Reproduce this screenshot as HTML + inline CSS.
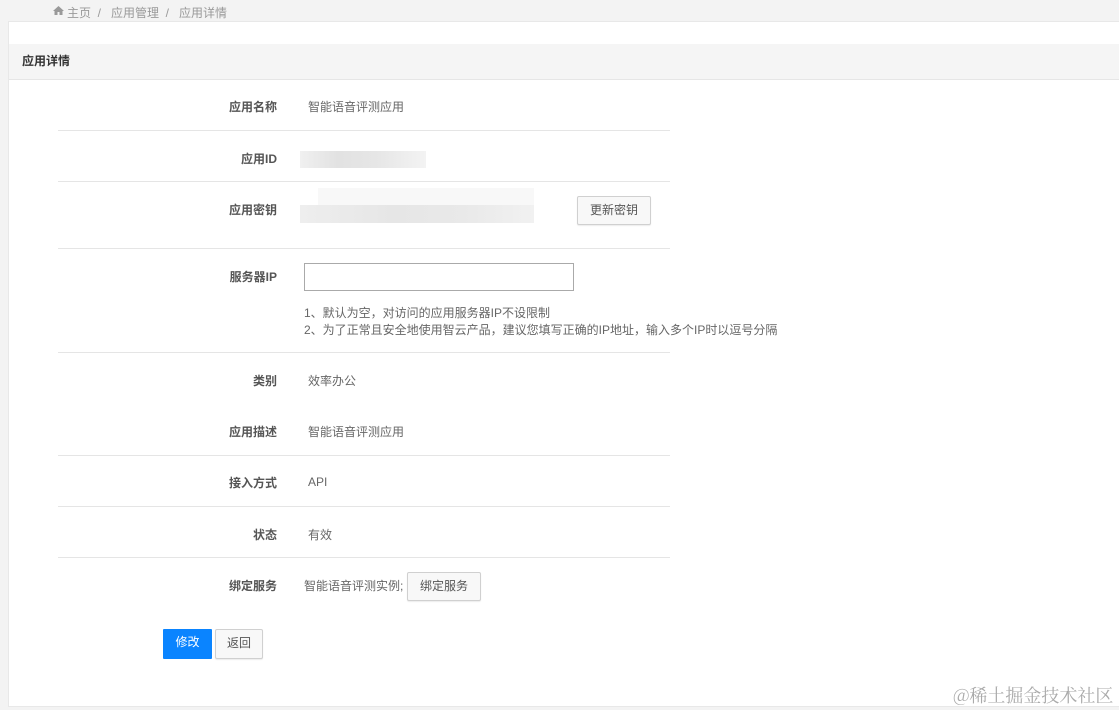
<!DOCTYPE html>
<html><head><meta charset="utf-8"><style>
*{margin:0;padding:0;box-sizing:border-box}
body{width:1119px;height:710px;background:#f3f3f3;font-family:"Liberation Sans","Noto Sans CJK SC",sans-serif;font-size:12px;color:#666;position:relative;overflow:hidden}
.a{position:absolute;white-space:nowrap}
.panel{position:absolute;left:8px;top:21px;width:1111px;height:686px;background:#fff;border:1px solid #e8e8e8;border-right:none}
.hdr{position:absolute;left:9px;top:44px;width:1110px;height:36px;background:#f5f5f5;border-bottom:1px solid #e6e6e6}
.line{position:absolute;left:58px;width:612px;height:1px;background:#e5e5e5}
.lbl{position:absolute;right:842px;font-weight:bold;color:#555;font-size:12px;white-space:nowrap}
.v{position:absolute;left:308px;color:#666;white-space:nowrap}
.btn{position:absolute;background:#f8f8f8;border:1px solid #d0d0d0;border-radius:2px;color:#555;text-align:center;font-size:12px;box-shadow:0 1px 1px rgba(0,0,0,.08)}
.blur{position:absolute;background:#ececec}
</style></head><body>
<svg class="a" style="left:53px;top:6px" width="11" height="9" viewBox="0 0 11 9"><path d="M5.5 0 L11 5 L9.5 5 L9.5 9 L6.5 9 L6.5 6 L4.5 6 L4.5 9 L1.5 9 L1.5 5 L0 5 Z" fill="#999"/></svg>
<div class="a" style="left:67px;top:4px;color:#999">主页 &nbsp;/&nbsp;&nbsp; 应用管理 &nbsp;/&nbsp;&nbsp; 应用详情</div>
<div class="panel"></div>
<div class="hdr"></div>
<div class="a" style="left:22px;top:52px;font-weight:bold;color:#333">应用详情</div>

<div class="lbl" style="top:98px">应用名称</div><div class="v" style="top:98px">智能语音评测应用</div>
<div class="line" style="top:130px"></div>
<div class="lbl" style="top:150px">应用ID</div>
<div class="blur" style="left:300px;top:151px;width:126px;height:17px;background:linear-gradient(90deg,#f0f0f0,#e2e2e2 30%,#e6e6e6 60%,#f3f3f3)"></div>
<div class="line" style="top:181px"></div>
<div class="lbl" style="top:201px">应用密钥</div>
<div class="blur" style="left:300px;top:205px;width:234px;height:18px;background:linear-gradient(90deg,#eee,#e6e6e6 40%,#e9e9e9 70%,#f1f1f1)"></div>
<div class="blur" style="left:318px;top:188px;width:216px;height:17px;background:#f8f8f8"></div>
<div class="btn" style="left:577px;top:196px;width:74px;height:29px;line-height:27px">更新密钥</div>
<div class="line" style="top:248px"></div>
<div class="lbl" style="top:268px">服务器IP</div>
<div class="a" style="left:304px;top:263px;width:270px;height:28px;border:1px solid #aaa;background:#fff"></div>
<div class="a" style="left:304px;top:304px">1、默认为空，对访问的应用服务器IP不设限制</div>
<div class="a" style="left:304px;top:321px">2、为了正常且安全地使用智云产品，建议您填写正确的IP地址，输入多个IP时以逗号分隔</div>
<div class="line" style="top:352px"></div>
<div class="lbl" style="top:372px">类别</div><div class="v" style="top:372px">效率办公</div>
<div class="lbl" style="top:423px">应用描述</div><div class="v" style="top:423px">智能语音评测应用</div>
<div class="line" style="top:455px"></div>
<div class="lbl" style="top:474px">接入方式</div><div class="v" style="top:475px">API</div>
<div class="line" style="top:506px"></div>
<div class="lbl" style="top:526px">状态</div><div class="v" style="top:526px">有效</div>
<div class="line" style="top:557px"></div>
<div class="lbl" style="top:577px">绑定服务</div><div class="a" style="left:304px;top:577px">智能语音评测实例;</div>
<div class="btn" style="left:407px;top:572px;width:74px;height:29px;line-height:27px">绑定服务</div>
<div class="a" style="left:163px;top:629px;width:49px;height:30px;background:#0a84ff;color:#fff;line-height:27px;text-align:center;border-radius:1px">修改</div>
<div class="btn" style="left:215px;top:629px;width:48px;height:30px;line-height:27px">返回</div>
<div class="a" style="left:953px;top:682px;font-size:18px;color:#aaa;font-family:'Noto Serif CJK SC',serif">@稀土掘金技术社区</div>
</body></html>
